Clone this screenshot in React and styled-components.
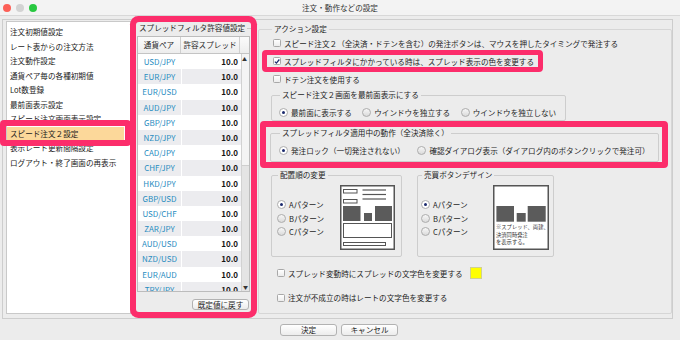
import React from 'react';
import styled, { createGlobalStyle, css } from 'styled-components';

const PINK = '#fc2d6b';

const GlobalStyle = createGlobalStyle`
  html, body {
    margin: 0;
    padding: 0;
  }
  body {
    background: #ececec;
    font-family: "Noto Sans CJK JP", "Noto Sans", sans-serif;
    font-size: 7.6px;
    color: #1e1e1e;
  }
`;

const Window = styled.div`
  width: 680px;
  height: 340px;
  display: flex;
  flex-direction: column;
  background: #ececec;
  overflow: hidden;
`;

const TitleBar = styled.div`
  height: 16px;
  flex: none;
  box-sizing: border-box;
  display: grid;
  grid-template-columns: 1fr auto 1fr;
  align-items: center;
  background: #f3f3f3;
  border-bottom: 1px solid #d8d8d8;
`;

const Lights = styled.div`
  display: flex;
  gap: 5px;
  padding-left: 3px;
`;

const Light = styled.span`
  width: 8px;
  height: 8px;
  border-radius: 50%;
  background: ${p => p.$color};
`;

const Title = styled.div`
  color: #333;
  line-height: 15px;
`;

const Frame = styled.div`
  margin: 3px 0 0 2px;
  width: 671px;
  height: 300px;
  box-sizing: border-box;
  border: 1px solid #cdcdcd;
  padding: 1px 0 0 3px;
  display: flex;
  align-items: flex-start;
`;

/* left menu */
const MenuList = styled.ul`
  list-style: none;
  margin: 0;
  padding: 3px 0 0;
  width: 125px;
  height: 293px;
  box-sizing: border-box;
  background: #fff;
  border: 1px solid #c9c9c9;
`;

const MenuItem = styled.li`
  height: 14.55px;
  line-height: 14.55px;
  margin-right: 6px;
  padding-left: 3px;
  white-space: nowrap;
  color: #1a1a1a;

  ${p => p.$active && css`
    position: relative;
    background: #fcd89a;
    &::after {
      content: '';
      position: absolute;
      top: -6.5px;
      bottom: -5px;
      left: -7px;
      right: -7px;
      border: 6px solid ${PINK};
      border-radius: 4px;
      z-index: 2;
    }
  `}
`;

/* middle: spread filter table */
const SpreadPanel = styled.div`
  margin: 1px 0 0 5px;
  width: 115px;
  height: 290px;
  box-sizing: border-box;
  display: flex;
  flex-direction: column;
  border-radius: 3px;
  box-shadow: 0 0 0 6px ${PINK};
`;

const PanelTitle = styled.div`
  display: flex;
  align-items: center;
  margin-top: 1px;
  padding-left: 3px;
  line-height: 10px;
  white-space: nowrap;

  &::after {
    content: '';
    flex: 1;
    margin-left: 2px;
    border-top: 1px solid #c8c8c8;
  }
`;

const Table = styled.div`
  margin: 3px 0 0 1px;
  width: 113px;
  box-sizing: border-box;
  border: 1px solid #bcbcbc;
  background: #fff;
  font-size: 8px;
`;

const HeadRow = styled.div`
  display: grid;
  grid-template-columns: 43px 59px 1fr;
  height: 16px;
  border-bottom: 1px solid #c4c4c4;
  background: linear-gradient(#fbfbfb, #ededed);
`;

const HeadCell = styled.div`
  font-size: 7.6px;
  line-height: 16px;
  text-align: center;
  border-right: 1px solid #cfcfcf;
  white-space: nowrap;
  &:last-child {
    border-right: none;
  }
`;

const TableBody = styled.div`
  display: flex;
  height: 237px;
  overflow: hidden;
`;

const Rows = styled.div`
  width: 103px;
`;

const Row = styled.div`
  display: flex;
  height: 15.2px;
  line-height: 15.2px;
  background: ${p => (p.$odd ? '#ececef' : '#fff')};
`;

const PairCell = styled.div`
  width: 43px;
  text-align: center;
  color: #2a8cbf;
  border-right: 1px solid #fff;
`;

const ValueCell = styled.div`
  flex: 1;
  text-align: right;
  padding-right: 3px;
  font-weight: 700;
  color: #151515;
`;

const ScrollTrack = styled.div`
  flex: 1;
  display: flex;
  flex-direction: column;
  align-items: center;
  background: #e4e4e4;
  border-left: 1px solid #d2d2d2;
`;

const ScrollArrow = styled.div`
  font-size: 5px;
  line-height: 9px;
  height: 9px;
  color: #333;
`;

const ScrollThumb = styled.div`
  width: 100%;
  height: 112px;
  box-sizing: border-box;
  background: #f4f4f4;
  border-bottom: 1px solid #cfcfcf;
`;

const ScrollFill = styled.div`
  flex: 1;
`;

const PushButton = styled.button`
  width: 57px;
  height: ${p => p.$h || 12}px;
  padding: 0;
  font-family: inherit;
  font-size: 7.6px;
  line-height: 10px;
  color: #222;
  border: 1px solid #b2b2b2;
  border-radius: 3px;
  background: linear-gradient(#ffffff, #ececec);
`;

const ResetButton = styled(PushButton)`
  align-self: flex-end;
  margin: 7px 2px 0 0;
`;

/* right: action settings */
const Group = styled.fieldset`
  margin: 0;
  padding: 0;
  min-width: 0;
  box-sizing: border-box;
  border: 1px solid #cdcdcd;
  border-radius: 2px;
`;

const Legend = styled.legend`
  padding: 0 2px;
  margin-left: 1px;
  line-height: 10px;
  white-space: nowrap;
`;

const ActionGroup = styled(Group)`
  flex: 1;
  margin: 3px 0 0 7px;
  height: 290px;
  padding: 3px 0 0 12px;
  border-color: #d6d6d6;
`;

const Column = styled.div`
  display: flex;
  flex-direction: column;
  align-items: flex-start;
`;

const CheckRow = styled.label`
  display: flex;
  align-items: center;
  gap: 3px;
  height: 12px;
  white-space: nowrap;
  margin: ${p => p.$m || '0 0 0 2px'};
`;

const Box = styled.span`
  width: 8px;
  height: 8px;
  flex: none;
  box-sizing: border-box;
  border: 1px solid #a8a8a8;
  border-radius: 1.5px;
  background: ${p => (p.$checked ? '#fff' : 'linear-gradient(#ffffff, #ececec)')};
  display: flex;
  align-items: center;
  justify-content: center;
`;

const Marked = styled.div`
  position: relative;
  margin: ${p => p.$m || '0'};
  &::after {
    content: '';
    position: absolute;
    top: ${p => p.$t}px;
    right: ${p => p.$r}px;
    bottom: ${p => p.$b}px;
    left: ${p => p.$l}px;
    border: ${p => p.$w}px solid ${PINK};
    border-radius: 4px;
    pointer-events: none;
  }
`;

const RadioRow = styled.div`
  display: flex;
  align-items: center;
  gap: ${p => p.$gap}px;
  height: 12px;
`;

const RadioItem = styled.label`
  display: flex;
  align-items: center;
  gap: 3px;
  white-space: nowrap;
`;

const Radio = styled.span`
  width: 9px;
  height: 9px;
  flex: none;
  box-sizing: border-box;
  border-radius: 50%;
  border: 1px solid #acacac;
  background: ${p => (p.$checked ? '#fff' : 'linear-gradient(#f7f7f7, #dadada)')};
  display: flex;
  align-items: center;
  justify-content: center;

  &::after {
    content: '';
    display: ${p => (p.$checked ? 'block' : 'none')};
    width: 3px;
    height: 3px;
    border-radius: 50%;
    background: #1b2a6e;
  }
`;

const FrontGroup = styled(Group)`
  margin-top: 5px;
  width: 295px;
  padding: 6px 0 2px 7px;
`;

const FilterGroup = styled(Group)`
  width: 389px;
  padding: 6px 0 5px 8px;
`;

const PatternRow = styled.div`
  display: flex;
  gap: 15px;
  margin-top: 8px;
`;

const PatternGroup = styled(Group)`
  width: ${p => p.$w}px;
  height: 87px;
  padding: 5px ${p => p.$pr}px 0 ${p => p.$pl}px;
`;

const PatternBody = styled.div`
  display: flex;
  align-items: center;
  justify-content: space-between;
`;

const RadioColumn = styled.div`
  display: flex;
  flex-direction: column;
  gap: 2.7px;
  margin-top: 1px;
`;

const Swatch = styled.span`
  width: 12px;
  height: 12px;
  margin-left: 4px;
  box-sizing: border-box;
  background: #ffff00;
  border: 1px solid #d0d090;
`;

const Footer = styled.div`
  display: flex;
  justify-content: center;
  gap: 4px;
  padding: 5px 2px 0 0;
`;

const menuItems = [
  '注文初期値設定',
  'レート表からの注文方法',
  '注文動作設定',
  '通貨ペア毎の各種初期値',
  'Lot数登録',
  '最前面表示設定',
  'スピード注文画面表示設定',
  'スピード注文２設定',
  '表示レート更新間隔設定',
  'ログアウト・終了画面の再表示',
];

const pairs = [
  'USD/JPY', 'EUR/JPY', 'EUR/USD', 'AUD/JPY', 'GBP/JPY', 'NZD/JPY', 'CAD/JPY', 'CHF/JPY',
  'HKD/JPY', 'GBP/USD', 'USD/CHF', 'ZAR/JPY', 'AUD/USD', 'NZD/USD', 'EUR/AUD', 'TRY/JPY',
];

const CheckBox = ({ checked }) => (
  <Box $checked={checked}>
    {checked && (
      <svg width="7" height="7" viewBox="0 0 7 7">
        <path d="M1 3.6 L2.8 5.4 L6.2 1.2" fill="none" stroke="#1b2a6e" strokeWidth="1.5" />
      </svg>
    )}
  </Box>
);

const RadioOption = ({ checked, children }) => (
  <RadioItem>
    <Radio $checked={checked} />
    {children}
  </RadioItem>
);

const LayoutDiagram = () => (
  <svg width="55" height="65" viewBox="0 0 55 65">
    <rect x="0.75" y="0.75" width="53.5" height="63.5" fill="#fff" stroke="#555" strokeWidth="1.5" />
    <rect x="3.5" y="4.5" width="13.5" height="3.5" fill="none" stroke="#555" />
    <line x1="22.5" y1="5" x2="46" y2="5" stroke="#555" strokeWidth="1.2" />
    <line x1="22.5" y1="9.5" x2="46" y2="9.5" stroke="#555" strokeWidth="1.2" />
    <line x1="22.5" y1="14" x2="46" y2="14" stroke="#555" strokeWidth="1.2" />
    <rect x="3.5" y="14.5" width="13.5" height="3.5" fill="none" stroke="#555" />
    <rect x="3" y="21" width="17.5" height="15" fill="#5b5b5b" />
    <rect x="24" y="28" width="8" height="8" fill="#5b5b5b" />
    <rect x="35" y="21" width="17" height="15" fill="#5b5b5b" />
    <rect x="3.5" y="38.5" width="48" height="14" fill="none" stroke="#555" />
    <rect x="3.5" y="57.5" width="42" height="3" fill="none" stroke="#555" />
  </svg>
);

const ButtonDiagram = () => (
  <svg width="56" height="65" viewBox="0 0 56 65">
    <rect x="0.75" y="0.75" width="54.5" height="63.5" fill="#fff" stroke="#555" strokeWidth="1.5" />
    <rect x="3.4" y="21" width="17.6" height="15.7" fill="#5b5b5b" />
    <rect x="23.7" y="28" width="9" height="8.7" fill="#5b5b5b" />
    <rect x="34.7" y="21" width="18" height="15.7" fill="#5b5b5b" />
    <g fontFamily="Noto Sans CJK JP, sans-serif" fontSize="5.3" fill="#333">
      <text x="3" y="44">※スプレッド、両建、</text>
      <text x="3" y="51.5">決済同時発注</text>
      <text x="3" y="59">を表示する。</text>
    </g>
  </svg>
);

export default function App() {
  return (
    <>
      <GlobalStyle />
      <Window>
        <TitleBar>
          <Lights>
            <Light $color="#fc5f57" />
            <Light $color="#d3d3d3" />
            <Light $color="#28c840" />
          </Lights>
          <Title>注文・動作などの設定</Title>
          <div />
        </TitleBar>

        <Frame>
          <MenuList>
            {menuItems.map((item, i) => (
              <MenuItem key={item} $active={i === 7}>{item}</MenuItem>
            ))}
          </MenuList>

          <SpreadPanel>
            <PanelTitle>スプレッドフィルタ許容値設定</PanelTitle>
            <Table>
              <HeadRow>
                <HeadCell>通貨ペア</HeadCell>
                <HeadCell>許容スプレッド</HeadCell>
                <HeadCell />
              </HeadRow>
              <TableBody>
                <Rows>
                  {pairs.map((pair, i) => (
                    <Row key={pair} $odd={i % 2 === 1}>
                      <PairCell>{pair}</PairCell>
                      <ValueCell>10.0</ValueCell>
                    </Row>
                  ))}
                </Rows>
                <ScrollTrack>
                  <ScrollThumb>
                    <ScrollArrow>▲</ScrollArrow>
                  </ScrollThumb>
                  <ScrollFill />
                  <ScrollArrow>▼</ScrollArrow>
                </ScrollTrack>
              </TableBody>
            </Table>
            <ResetButton $h={11}>既定値に戻す</ResetButton>
          </SpreadPanel>

          <ActionGroup>
            <Legend>アクション設定</Legend>
            <Column>
              <CheckRow>
                <CheckBox />
                スピード注文２（全決済・ドテンを含む）の発注ボタンは、マウスを押したタイミングで発注する
              </CheckRow>
              <Marked $m="6px 0 0" $t={-5} $b={-5} $l={-9} $r={-9} $w={5}>
                <CheckRow>
                  <CheckBox checked />
                  スプレッドフィルタにかかっている時は、スプレッド表示の色を変更する
                </CheckRow>
              </Marked>
              <CheckRow $m="6px 0 0 2px">
                <CheckBox />
                ドテン注文を使用する
              </CheckRow>

              <FrontGroup>
                <Legend>スピード注文２画面を最前面表示にする</Legend>
                <RadioRow $gap={10.5}>
                  <RadioOption checked>最前面に表示する</RadioOption>
                  <RadioOption>ウインドウを独立する</RadioOption>
                  <RadioOption>ウインドウを独立しない</RadioOption>
                </RadioRow>
              </FrontGroup>

              <Marked $m="7px 0 0 -1px" $t={-7} $b={-6} $l={-10} $r={-9} $w={6}>
                <FilterGroup>
                  <Legend>スプレッドフィルタ適用中の動作（全決済除く）</Legend>
                  <RadioRow $gap={12.5}>
                    <RadioOption checked>発注ロック（一切発注されない）</RadioOption>
                    <RadioOption>確認ダイアログ表示（ダイアログ内のボタンクリックで発注可）</RadioOption>
                  </RadioRow>
                </FilterGroup>
              </Marked>

              <PatternRow>
                <PatternGroup $w={131} $pl={5} $pr={6}>
                  <Legend>配置順の変更</Legend>
                  <PatternBody>
                    <RadioColumn>
                      <RadioOption checked>Aパターン</RadioOption>
                      <RadioOption>Bパターン</RadioOption>
                      <RadioOption>Cパターン</RadioOption>
                    </RadioColumn>
                    <LayoutDiagram />
                  </PatternBody>
                </PatternGroup>
                <PatternGroup $w={137} $pl={3} $pr={4}>
                  <Legend>売買ボタンデザイン</Legend>
                  <PatternBody>
                    <RadioColumn>
                      <RadioOption checked>Aパターン</RadioOption>
                      <RadioOption>Bパターン</RadioOption>
                      <RadioOption>Cパターン</RadioOption>
                    </RadioColumn>
                    <ButtonDiagram />
                  </PatternBody>
                </PatternGroup>
              </PatternRow>

              <CheckRow $m="10px 0 0 6px">
                <CheckBox />
                スプレッド変動時にスプレッドの文字色を変更する
                <Swatch />
              </CheckRow>
              <CheckRow $m="12.5px 0 0 6px">
                <CheckBox />
                注文が不成立の時はレートの文字色を変更する
              </CheckRow>
            </Column>
          </ActionGroup>
        </Frame>

        <Footer>
          <PushButton>決定</PushButton>
          <PushButton>キャンセル</PushButton>
        </Footer>
      </Window>
    </>
  );
}
